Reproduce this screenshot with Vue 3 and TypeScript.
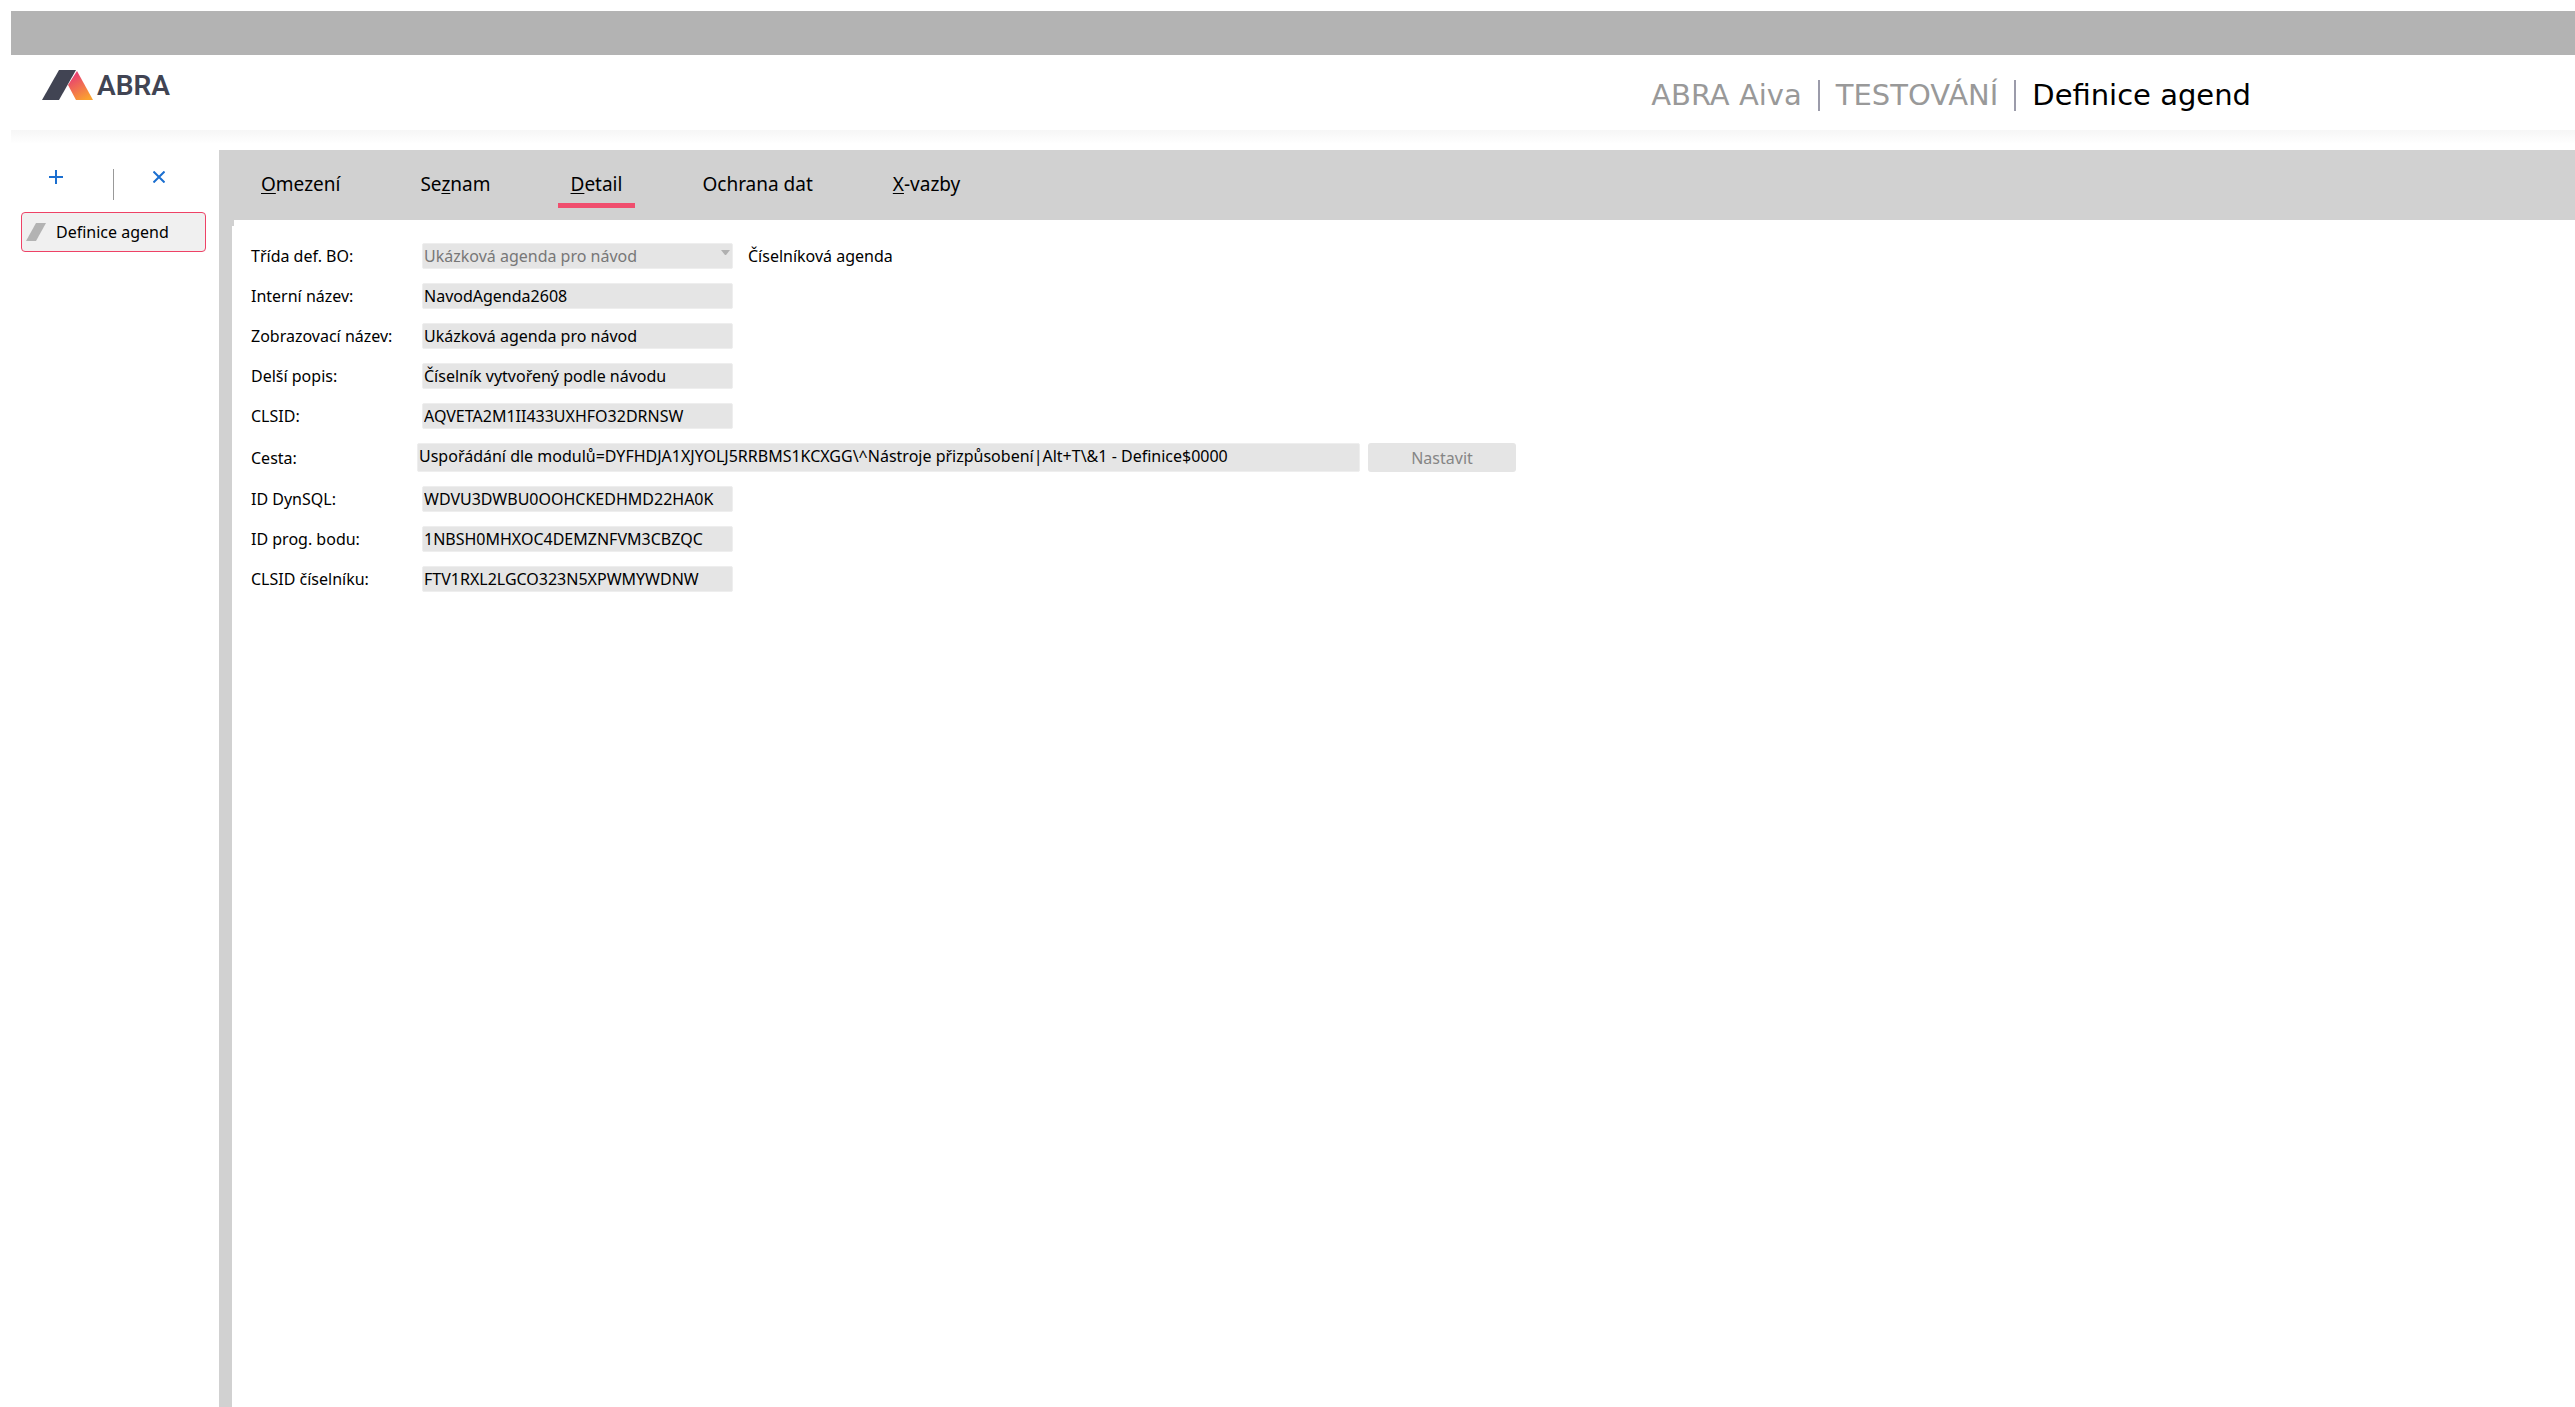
<script setup lang="ts">
interface Tab {
  id: string
  before: string
  key: string
  after: string
}

interface Field {
  id: string
  label: string
  value: string
  kind: 'select' | 'text' | 'path'
  note?: string
}

const tabs: Tab[] = [
  { id: 'omezeni', before: '', key: 'O', after: 'mezení' },
  { id: 'seznam', before: 'Se', key: 'z', after: 'nam' },
  { id: 'detail', before: '', key: 'D', after: 'etail' },
  { id: 'ochrana', before: 'Ochrana dat', key: '', after: '' },
  { id: 'vazby', before: '', key: 'X', after: '-vazby' },
]
const activeTab = 'detail'

const fields: Field[] = [
  { id: 'trida', label: 'Třída def. BO:', value: 'Ukázková agenda pro návod', kind: 'select', note: 'Číselníková agenda' },
  { id: 'interni', label: 'Interní název:', value: 'NavodAgenda2608', kind: 'text' },
  { id: 'zobrazovaci', label: 'Zobrazovací název:', value: 'Ukázková agenda pro návod', kind: 'text' },
  { id: 'popis', label: 'Delší popis:', value: 'Číselník vytvořený podle návodu', kind: 'text' },
  { id: 'clsid', label: 'CLSID:', value: 'AQVETA2M1II433UXHFO32DRNSW', kind: 'text' },
  {
    id: 'cesta',
    label: 'Cesta:',
    value: 'Uspořádání dle modulů=DYFHDJA1XJYOLJ5RRBMS1KCXGG\\^Nástroje přizpůsobení|Alt+T\\&1 - Definice$0000',
    kind: 'path',
  },
  { id: 'dynsql', label: 'ID DynSQL:', value: 'WDVU3DWBU0OOHCKEDHMD22HA0K', kind: 'text' },
  { id: 'prog', label: 'ID prog. bodu:', value: '1NBSH0MHXOC4DEMZNFVM3CBZQC', kind: 'text' },
  { id: 'ciselnik', label: 'CLSID číselníku:', value: 'FTV1RXL2LGCO323N5XPWMYWDNW', kind: 'text' },
]
</script>

<template>
  <div class="app">
    <div class="topbar"></div>
    <header class="header">
      <a class="logo" href="#" aria-label="ABRA">
        <svg width="52" height="30" viewBox="0 0 52 30" aria-hidden="true">
          <defs>
            <linearGradient id="flame" x1="0.2" y1="0" x2="0.7" y2="1">
              <stop offset="0.15" stop-color="#e8436f" />
              <stop offset="1" stop-color="#fba22f" />
            </linearGradient>
          </defs>
          <path d="M17 0H34L17 30H0Z" fill="#414453" />
          <path d="M35 1L51 30H34L26 15Z" fill="url(#flame)" />
        </svg>
        <span class="wordmark">ABRA</span>
      </a>
      <h1 class="title">
        <span>ABRA Aiva</span>
        <span class="divider"></span>
        <span>TESTOVÁNÍ</span>
        <span class="divider"></span>
        <span class="current">Definice agend</span>
      </h1>
    </header>

    <div class="body">
      <aside class="sidebar">
        <div class="tools">
          <button class="tool" type="button" aria-label="Přidat">
            <svg width="14" height="14" viewBox="0 0 14 14"><path d="M7 0V14M0 7H14" stroke="#1b6fd0" stroke-width="2" /></svg>
          </button>
          <span class="tools-line"></span>
          <button class="tool" type="button" aria-label="Zavřít">
            <svg width="12" height="12" viewBox="0 0 12 12"><path d="M0.500 0.500L11.500 11.500M11.500 0.500L0.500 11.500" stroke="#1b6fd0" stroke-width="2" /></svg>
          </button>
        </div>
        <button class="agenda" type="button">
          <svg width="20" height="18" viewBox="0 0 20 18" aria-hidden="true"><path d="M10 0H20L10 18H0Z" fill="#b3b3b3" /></svg>
          <span>Definice agend</span>
        </button>
      </aside>

      <main class="main">
        <nav class="tabs" role="tablist">
          <button
            v-for="t in tabs"
            :key="t.id"
            class="tab"
            :class="{ active: t.id === activeTab }"
            type="button"
            role="tab"
            :aria-selected="t.id === activeTab"
          >{{ t.before }}<u v-if="t.key">{{ t.key }}</u>{{ t.after }}</button>
        </nav>
        <div class="content">
          <span class="notch"></span>
          <form class="form">
            <div v-for="f in fields" :key="f.id" class="row" :class="{ path: f.kind === 'path' }">
              <label class="label" :for="f.id">{{ f.label }}</label>
              <div v-if="f.kind === 'select'" class="select">
                <select :id="f.id" class="field" disabled>
                  <option>{{ f.value }}</option>
                </select>
                <svg class="arrow" width="9" height="5" viewBox="0 0 9 5" aria-hidden="true"><path d="M0 0H9L5 5H4Z" fill="#b0b0b0" /></svg>
              </div>
              <input v-else :id="f.id" class="field" type="text" :value="f.value" readonly />
              <span v-if="f.note" class="note">{{ f.note }}</span>
              <button v-if="f.kind === 'path'" class="set" type="button" disabled>Nastavit</button>
            </div>
          </form>
        </div>
      </main>
    </div>
  </div>
</template>

<style>
html,
body,
#app {
  height: 100%;
}

body {
  margin: 0;
  background: #fff;
}
</style>

<style scoped>
.app {
  box-sizing: border-box;
  min-height: 100%;
  display: flex;
  flex-direction: column;
  padding: 11px 0 0 11px;
  background: #fff;
  color: #000;
  font-family: "Noto Sans", sans-serif;
  font-size: 16px;
}

button {
  margin: 0;
  padding: 0;
  border: 0;
  background: none;
  color: inherit;
  font: inherit;
}

.topbar {
  height: 44px;
  background: #b3b3b3;
}

.header {
  display: flex;
  justify-content: space-between;
  align-items: flex-start;
  height: 75px;
  box-sizing: border-box;
  padding: 15px 324px 0 31px;
}

.logo {
  display: flex;
  gap: 3px;
  color: #414453;
  text-decoration: none;
}

.wordmark {
  font-family: Roboto, sans-serif;
  font-size: 28px;
  font-weight: 600;
  line-height: 32px;
}

.title {
  display: flex;
  align-items: center;
  gap: 16px;
  margin: 8px 0 0;
  color: #999;
  font-family: "DejaVu Sans", sans-serif;
  font-size: 29px;
  font-weight: 400;
  line-height: 34px;
}

.divider {
  width: 2px;
  height: 31px;
  background: #9b9baa;
}

.current {
  color: #000;
}

.body {
  flex: 1;
  display: flex;
  padding-top: 20px;
  background: linear-gradient(#f6f6f6, #fff 14px);
}

.sidebar {
  width: 208px;
  flex: none;
  box-sizing: border-box;
  padding: 19px 13px 0 10px;
}

.tools {
  display: flex;
  align-items: flex-start;
  gap: 39px;
  height: 43px;
  padding-left: 28px;
}

.tool {
  display: flex;
  align-items: center;
  width: 25px;
  height: 16px;
}

.tools-line {
  width: 1px;
  height: 31px;
  background: #999;
}

.agenda {
  display: flex;
  align-items: center;
  gap: 10px;
  width: 100%;
  height: 40px;
  box-sizing: border-box;
  padding-left: 4px;
  border: 1px solid #ee4266;
  border-radius: 4px;
  background: #f0f0f0;
}

.main {
  flex: 1;
  display: flex;
  flex-direction: column;
  min-width: 0;
}

.tabs {
  display: flex;
  gap: 54px;
  height: 70px;
  box-sizing: border-box;
  padding: 16px 0 12px 29px;
  background: #d1d1d1;
}

.tab {
  box-sizing: border-box;
  padding: 0 13px 2px;
  border-bottom: 5px solid transparent;
  font-size: 19px;
  line-height: 34px;
}

.tab.active {
  border-color: #f04e6e;
}

.tab u {
  text-decoration-thickness: 1px;
  text-underline-offset: 2px;
}

.content {
  flex: 1;
  position: relative;
  border-left: 13px solid #d1d1d1;
}

.notch {
  position: absolute;
  left: 0;
  top: 0;
  width: 2px;
  height: 6px;
  background: #d1d1d1;
}

.form {
  display: flex;
  flex-direction: column;
  gap: 14px;
  padding: 23px 0 0 19px;
}

.row {
  display: flex;
  align-items: center;
  height: 26px;
}

.label {
  width: 171px;
  line-height: 22px;
}

.field {
  appearance: none;
  box-sizing: border-box;
  width: 311px;
  height: 26px;
  margin: 0;
  padding: 0 1px;
  border: 1px solid #eee;
  border-radius: 2px;
  background: #e5e5e5;
  color: #000;
  font: inherit;
  opacity: 1;
}

.select {
  position: relative;
  display: flex;
}

.select .field {
  color: #777;
}

.arrow {
  position: absolute;
  top: 7px;
  right: 3px;
}

.note {
  margin-left: 15px;
}

.path {
  height: 29px;
}

.path .label {
  width: 166px;
}

.path .field {
  width: 943px;
  height: 29px;
  padding: 0 1px 4px;
}

.set {
  width: 148px;
  height: 29px;
  margin-left: 8px;
  border-radius: 3px;
  background: #e5e5e5;
  color: #858585;
}
</style>
